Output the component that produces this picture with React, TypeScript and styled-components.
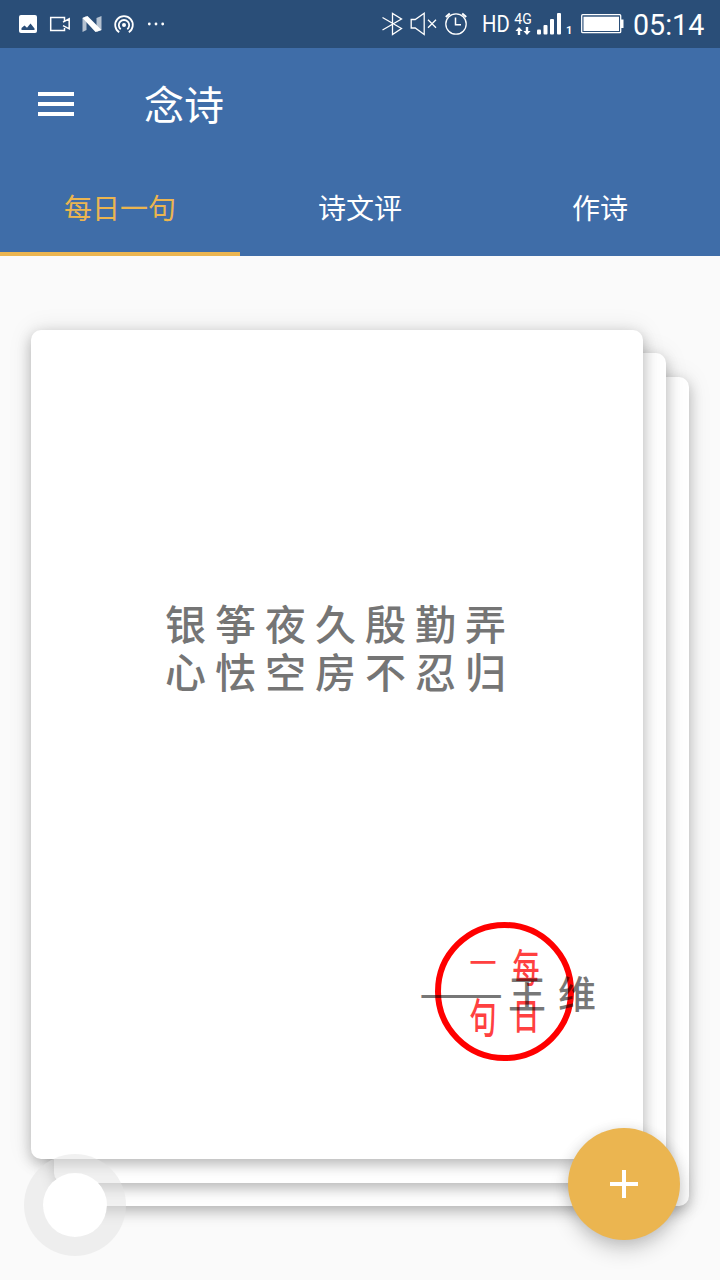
import React from 'react';
import styled, { createGlobalStyle } from 'styled-components';

const GlobalStyle = createGlobalStyle`
  * { box-sizing: border-box; }
  body { margin: 0; background: #fafafa; }
  button { border: 0; padding: 0; background: none; font: inherit; color: inherit; }
`;

const Screen = styled.div`
  position: relative;
  display: flex;
  flex-direction: column;
  width: 720px;
  height: 1280px;
  overflow: hidden;
  background: #fafafa;
  font-family: Roboto, 'Noto Sans CJK SC', sans-serif;
`;

const StatusBar = styled.div`
  display: flex;
  justify-content: space-between;
  height: 48px;
  padding: 0 15px 0 12px;
  background: #2a4e78;
  color: #fff;
`;

const StatusGroup = styled.div`
  display: flex;
  height: 48px;
`;

const Glyph = styled.svg<{ $gap?: number }>`
  display: block;
  flex: none;
  height: 48px;
  margin-left: ${p => p.$gap ?? 0}px;
`;

const HdLabel = styled.span`
  width: 28px;
  margin-left: 14px;
  font-size: 23px;
  line-height: 49px;
  transform: scaleX(0.88);
  transform-origin: left;
`;

const Network = styled.div`
  display: flex;
  flex-direction: column;
  align-items: center;
  width: 20px;
  margin-left: 3px;
  padding-top: 12px;
  font-size: 14px;
  line-height: 15px;
`;

const SimNumber = styled.span`
  width: 6px;
  margin-left: 3px;
  font-size: 11px;
  font-weight: 700;
  line-height: 62px;
`;

const Clock = styled.span`
  width: 72px;
  margin-left: 8px;
  font-size: 28.6px;
  line-height: 51px;
  white-space: nowrap;
`;

const Header = styled.header`
  height: 208px;
  background: #3f6da8;
  color: #fff;
`;

const Toolbar = styled.div`
  display: flex;
  align-items: center;
  height: 112px;
  padding-left: 38px;
`;

const MenuButton = styled.button`
  display: flex;
  flex-direction: column;
  gap: 6px;
  width: 36px;
`;

const MenuLine = styled.span`
  height: 4px;
  background: #fff;
`;

const Title = styled.h1`
  margin: 6px 0 0 70px;
  font-size: 40px;
  font-weight: 400;
  line-height: 56px;
`;

const Tabs = styled.nav`
  display: grid;
  grid-template-columns: repeat(3, 1fr);
  height: 96px;
`;

const Tab = styled.button<{ $active?: boolean }>`
  padding-top: 8px;
  border-bottom: 4px solid ${p => (p.$active ? '#ebb550' : 'transparent')};
  color: ${p => (p.$active ? '#ebb550' : '#fff')};
  font-size: 28px;
  line-height: 40px;
`;

const CardStack = styled.main`
  display: grid;
  padding: 74px 0 0 31px;
`;

const Card = styled.article<{ $level: number }>`
  grid-area: 1 / 1;
  display: flex;
  flex-direction: column;
  width: 612px;
  height: 829.4px;
  margin: ${p => p.$level * 23.4}px 0 0 ${p => p.$level * 23.2}px;
  border-radius: 10px;
  background: #fff;
  box-shadow: 0 5px 14px rgba(0, 0, 0, 0.24), 0 0 24px rgba(0, 0, 0, 0.1);
`;

const Poem = styled.p`
  margin: 268px 0 0 134px;
  color: #757575;
  font-family: KaiTi, STKaiti, 'Noto Sans CJK SC', sans-serif;
  font-size: 41px;
  font-weight: 500;
  letter-spacing: 9px;
  line-height: 48px;
  white-space: nowrap;
`;

const Signature = styled.div`
  position: relative;
  width: 180px;
  height: 140px;
  margin: 228px 0 0 390px;
`;

const Seal = styled.div`
  display: grid;
  grid-template-columns: 22px 22px;
  grid-template-rows: 43px 43px;
  column-gap: 21px;
  row-gap: 6px;
  place-content: center;
  place-items: center;
  width: 139px;
  height: 139px;
  margin: -0.5px 0 0 14px;
  border: 6px solid #f00;
  border-radius: 50%;
`;

const SealMark = styled.span<{ $stretch?: number; $rise?: number }>`
  color: #ff4040;
  font-family: 'Noto Sans CJK SC', sans-serif;
  font-size: 27px;
  font-weight: 500;
  line-height: 40px;
  transform: translateY(${p => -(p.$rise ?? 0)}px) scaleY(${p => p.$stretch ?? 1});
`;

const Author = styled.div`
  position: absolute;
  top: 42px;
  left: -2px;
  display: flex;
  align-items: center;
  color: rgba(0, 0, 0, 0.54);
  font-family: KaiTi, STKaiti, 'Noto Sans CJK SC', sans-serif;
  font-size: 38px;
  font-weight: 500;
  line-height: 56px;
  white-space: nowrap;
`;

const Dash = styled.span`
  width: 80px;
  font-size: 40px;
  line-height: 48px;
  transform: translateY(-1px) scaleX(1.25);
  transform-origin: left;
`;

const AuthorName = styled.span`
  margin-left: 9px;
  letter-spacing: 12px;
`;

const AddButton = styled.button`
  position: absolute;
  right: 40px;
  bottom: 40px;
  display: grid;
  place-items: center;
  width: 112px;
  height: 112px;
  border-radius: 50%;
  background: #ebb550;
  box-shadow: 0 11px 20px rgba(0, 0, 0, 0.16), 0 2px 14px rgba(0, 0, 0, 0.12);
`;

const TouchDot = styled.div`
  position: absolute;
  left: 24px;
  bottom: 24px;
  width: 102px;
  height: 102px;
  border: 19px solid rgba(225, 225, 225, 0.48);
  border-radius: 50%;
  background: #fff;
  background-clip: padding-box;
`;

export default function App() {
  return (
    <Screen>
      <GlobalStyle />
      <StatusBar>
        <StatusGroup>
          <Glyph width="32" viewBox="0 0 32 48">
            <rect x="7" y="15" width="18" height="18" rx="2" fill="#fff" />
            <path d="M9.5 30v-2l3-2.5 2.5 2.2 3.5-4.2 4 5v1.5z" fill="#2a4e78" />
          </Glyph>
          <Glyph width="32" viewBox="0 0 32 48" fill="none" stroke="#fff" strokeWidth="1.5">
            <path d="M20.5 28v2.5H6.7v-13h13.8V21M19 22.2l6.2-3.4v10l-6.2-3.2" />
          </Glyph>
          <Glyph width="32" viewBox="0 0 32 48" fill="#fff">
            <path d="M6.5 18l4-2v14l-4 2zM20.5 18l5-2v14l-5 2z" opacity=".65" />
            <path d="M6.5 18l5-2 14 14-6 2z" />
          </Glyph>
          <Glyph width="32" viewBox="0 0 32 48" fill="none" stroke="#fff" strokeWidth="1.8">
            <circle cx="16" cy="25" r="2" fill="#fff" stroke="none" />
            <path d="M12.7 29.2a5.2 5.2 0 1 1 6.6 0M11.2 32.3a8.8 8.8 0 1 1 9.6 0" />
          </Glyph>
          <Glyph width="32" viewBox="0 0 32 48" fill="#fff">
            <circle cx="9.3" cy="24" r="1.4" />
            <circle cx="16" cy="24" r="1.4" />
            <circle cx="22.7" cy="24" r="1.4" />
          </Glyph>
        </StatusGroup>
        <StatusGroup>
          <Glyph width="22" viewBox="0 0 22 48" fill="none" stroke="#fff" strokeWidth="1.3">
            <path d="M.5 17.5l19 11-9 6v-21l9 5.5-19 11" />
          </Glyph>
          <Glyph width="28" viewBox="0 0 28 48" $gap={6} fill="none" stroke="#fff" strokeWidth="1.3">
            <path d="M1.2 19.5h4l9-6.2v21.2l-9-6.5h-4zM18 19.7l8 8m0-8l-8 8" />
          </Glyph>
          <Glyph width="24" viewBox="0 0 24 48" $gap={6} fill="none" stroke="#fff" strokeWidth="1.3">
            <circle cx="12" cy="24" r="10.2" />
            <path d="M11.5 17.5v7.2h5.5" strokeWidth="1.5" />
            <path d="M1.8 17l4-3.6M22.2 17l-4-3.6" strokeWidth="2" />
          </Glyph>
          <HdLabel>HD</HdLabel>
          <Network>
            4G
            <svg width="16" height="8" viewBox="0 0 16 8" fill="#fff">
              <path d="M4 0l3.6 4H5.2V8H2.8V4H.4zM12 8L8.4 4h2.4V0h2.4v4h2.4z" />
            </svg>
          </Network>
          <Glyph width="26" viewBox="0 0 26 48" $gap={4} fill="#fff">
            <rect x="0" y="29.5" width="4" height="5" rx="1" />
            <rect x="6.5" y="25" width="4" height="9.5" rx="1" />
            <rect x="13" y="19" width="4" height="15.5" rx="1" />
            <rect x="20" y="13" width="4" height="21.5" rx="1" />
          </Glyph>
          <SimNumber>1</SimNumber>
          <Glyph width="44" viewBox="0 0 44 48" $gap={9} fill="#fff">
            <rect x=".7" y="14.7" width="39" height="18" rx="1" fill="none" stroke="#fff" strokeWidth="1.3" />
            <rect x="2.5" y="16.7" width="35.5" height="14.3" />
            <path d="M40 19.5h2.5V28H40z" />
          </Glyph>
          <Clock>05:14</Clock>
        </StatusGroup>
      </StatusBar>
      <Header>
        <Toolbar>
          <MenuButton aria-label="菜单">
            <MenuLine />
            <MenuLine />
            <MenuLine />
          </MenuButton>
          <Title>念诗</Title>
        </Toolbar>
        <Tabs>
          <Tab $active>每日一句</Tab>
          <Tab>诗文评</Tab>
          <Tab>作诗</Tab>
        </Tabs>
      </Header>
      <CardStack>
        <Card $level={2} />
        <Card $level={1} />
        <Card $level={0}>
          <Poem>
            银筝夜久殷勤弄
            <br />
            心怯空房不忍归
          </Poem>
          <Signature>
            <Seal>
              <SealMark $rise={5}>一</SealMark>
              <SealMark $stretch={1.45} $rise={1}>每</SealMark>
              <SealMark $stretch={1.5}>句</SealMark>
              <SealMark $stretch={1.35} $rise={1}>日</SealMark>
            </Seal>
            <Author>
              <Dash>——</Dash>
              <AuthorName>王维</AuthorName>
            </Author>
          </Signature>
        </Card>
      </CardStack>
      <TouchDot />
      <AddButton aria-label="添加">
        <svg width="28" height="28" viewBox="0 0 28 28" fill="#fff">
          <path d="M12 0h4v12h12v4H16v12h-4V16H0v-4h12z" />
        </svg>
      </AddButton>
    </Screen>
  );
}
